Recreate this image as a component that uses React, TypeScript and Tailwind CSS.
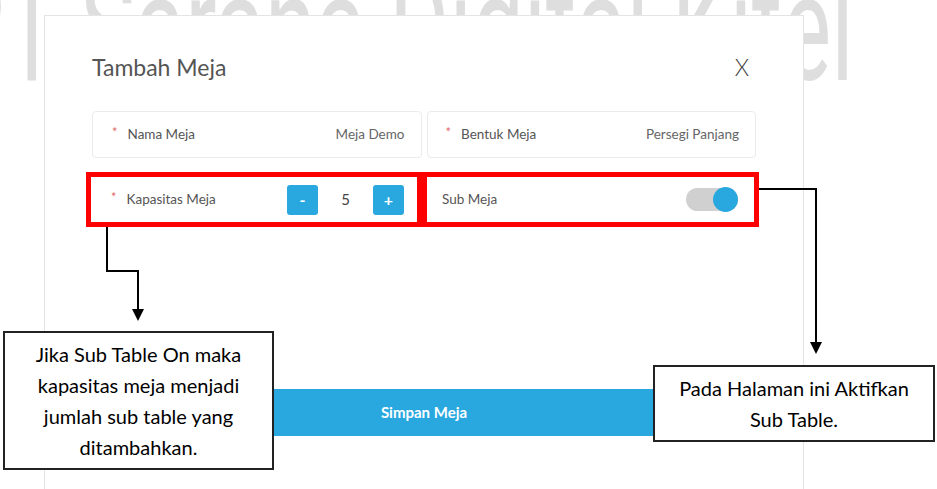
import React from "react";

const ui = { fontFamily: "Lato, 'Noto Sans', sans-serif" };
const note = { fontFamily: "Lato, 'Open Sans', sans-serif" };

function Star() {
  return <span className="text-[#e06a6a] text-[13px] mr-[10px] relative -top-[2px]">*</span>;
}

export default function App() {
  return (
    <div className="relative w-[937px] h-[489px] overflow-hidden bg-white" style={ui}>
      {/* watermark */}
      <div
        className="absolute left-[-54px] top-[-46px] whitespace-nowrap text-[150px] font-normal leading-none text-[#dedede] scale-x-[0.615] origin-left"
        style={{ fontFamily: "Roboto, sans-serif" }}
      >
        PT Sarana Digital Kitel
      </div>

      {/* modal */}
      <div className="relative ml-[44px] mt-[15px] w-[760px] h-[520px] border border-[#e4e4e4] bg-white px-[47px] pt-[35px]">
        <div className="flex items-center justify-between h-[32px]">
          <span className="text-[23px] text-[#555]">Tambah Meja</span>
          <span className="text-[23px] font-light text-[#444] mr-[7px]">X</span>
        </div>

        <div className="mt-[28px] grid grid-cols-2 gap-[5px]">
          <div className="h-[47px] rounded-[4px] border border-[#ebebeb] flex items-center justify-between pl-[19px] pr-[16px] text-[13.5px] text-[#555]">
            <span className="flex items-center"><Star />Nama Meja</span>
            <span className="text-[#666]">Meja Demo</span>
          </div>
          <div className="h-[47px] rounded-[4px] border border-[#ebebeb] flex items-center justify-between pl-[18px] pr-[16px] text-[13.5px] text-[#555]">
            <span className="flex items-center"><Star />Bentuk Meja</span>
            <span className="text-[#666]">Persegi Panjang</span>
          </div>
        </div>

        <div className="mt-[14px] -ml-[6px] w-[673px] grid grid-cols-[336px_337px]">
          <div className="h-[55px] border-[5px] border-[#ff0000] flex items-center justify-between pl-[20px] pr-[13px] text-[13.5px] text-[#555]">
            <span className="flex items-center"><Star />Kapasitas Meja</span>
            <div className="flex items-center">
              <div className="w-[31px] h-[30px] rounded-[3px] bg-[#29a8df] text-white flex items-center justify-center text-[16px] font-bold">-</div>
              <div className="w-[55px] text-center text-[15px] text-[#444]">5</div>
              <div className="w-[31px] h-[30px] rounded-[3px] bg-[#29a8df] text-white flex items-center justify-center text-[16px] font-bold">+</div>
            </div>
          </div>
          <div className="h-[55px] border-[5px] border-[#ff0000] flex items-center justify-between pl-[15px] pr-[16px] text-[13.5px] text-[#555]">
            <span>Sub Meja</span>
            <div className="w-[52px] h-[23px] rounded-full bg-[#d0d0d0] flex items-center justify-end">
              <div className="w-[25px] h-[25px] rounded-full bg-[#29a8df]" />
            </div>
          </div>
        </div>

        <div className="mt-[162px] h-[47px] bg-[#29a8df] flex items-center justify-center text-white text-[15px] font-bold">
          Simpan Meja
        </div>
      </div>

      {/* connectors */}
      <svg className="absolute left-0 top-0 pointer-events-none" width="937" height="489">
        <polyline points="107,227 107,271 138,271 138,311" fill="none" stroke="#000" strokeWidth="2" />
        <polygon points="132,309 144,309 138,321" fill="#000" />
        <polyline points="759,189 816,189 816,343" fill="none" stroke="#000" strokeWidth="2" />
        <polygon points="810,342 822,342 816,354" fill="#000" />
      </svg>

      <div
        className="absolute left-[3px] top-[331px] w-[271px] h-[139px] border-2 border-[#222] bg-white flex items-center justify-center text-center text-[20px] leading-[31px] text-black"
        style={note}
      >
        <div>
          Jika Sub Table On maka
          <br />
          kapasitas meja menjadi
          <br />
          jumlah sub table yang
          <br />
          ditambahkan.
        </div>
      </div>

      <div
        className="absolute left-[653px] top-[365px] w-[282px] h-[77px] border-2 border-[#222] bg-white flex items-center justify-center text-center text-[20px] leading-[31px] text-black"
        style={note}
      >
        <div>
          Pada Halaman ini Aktifkan
          <br />
          Sub Table.
        </div>
      </div>
    </div>
  );
}
